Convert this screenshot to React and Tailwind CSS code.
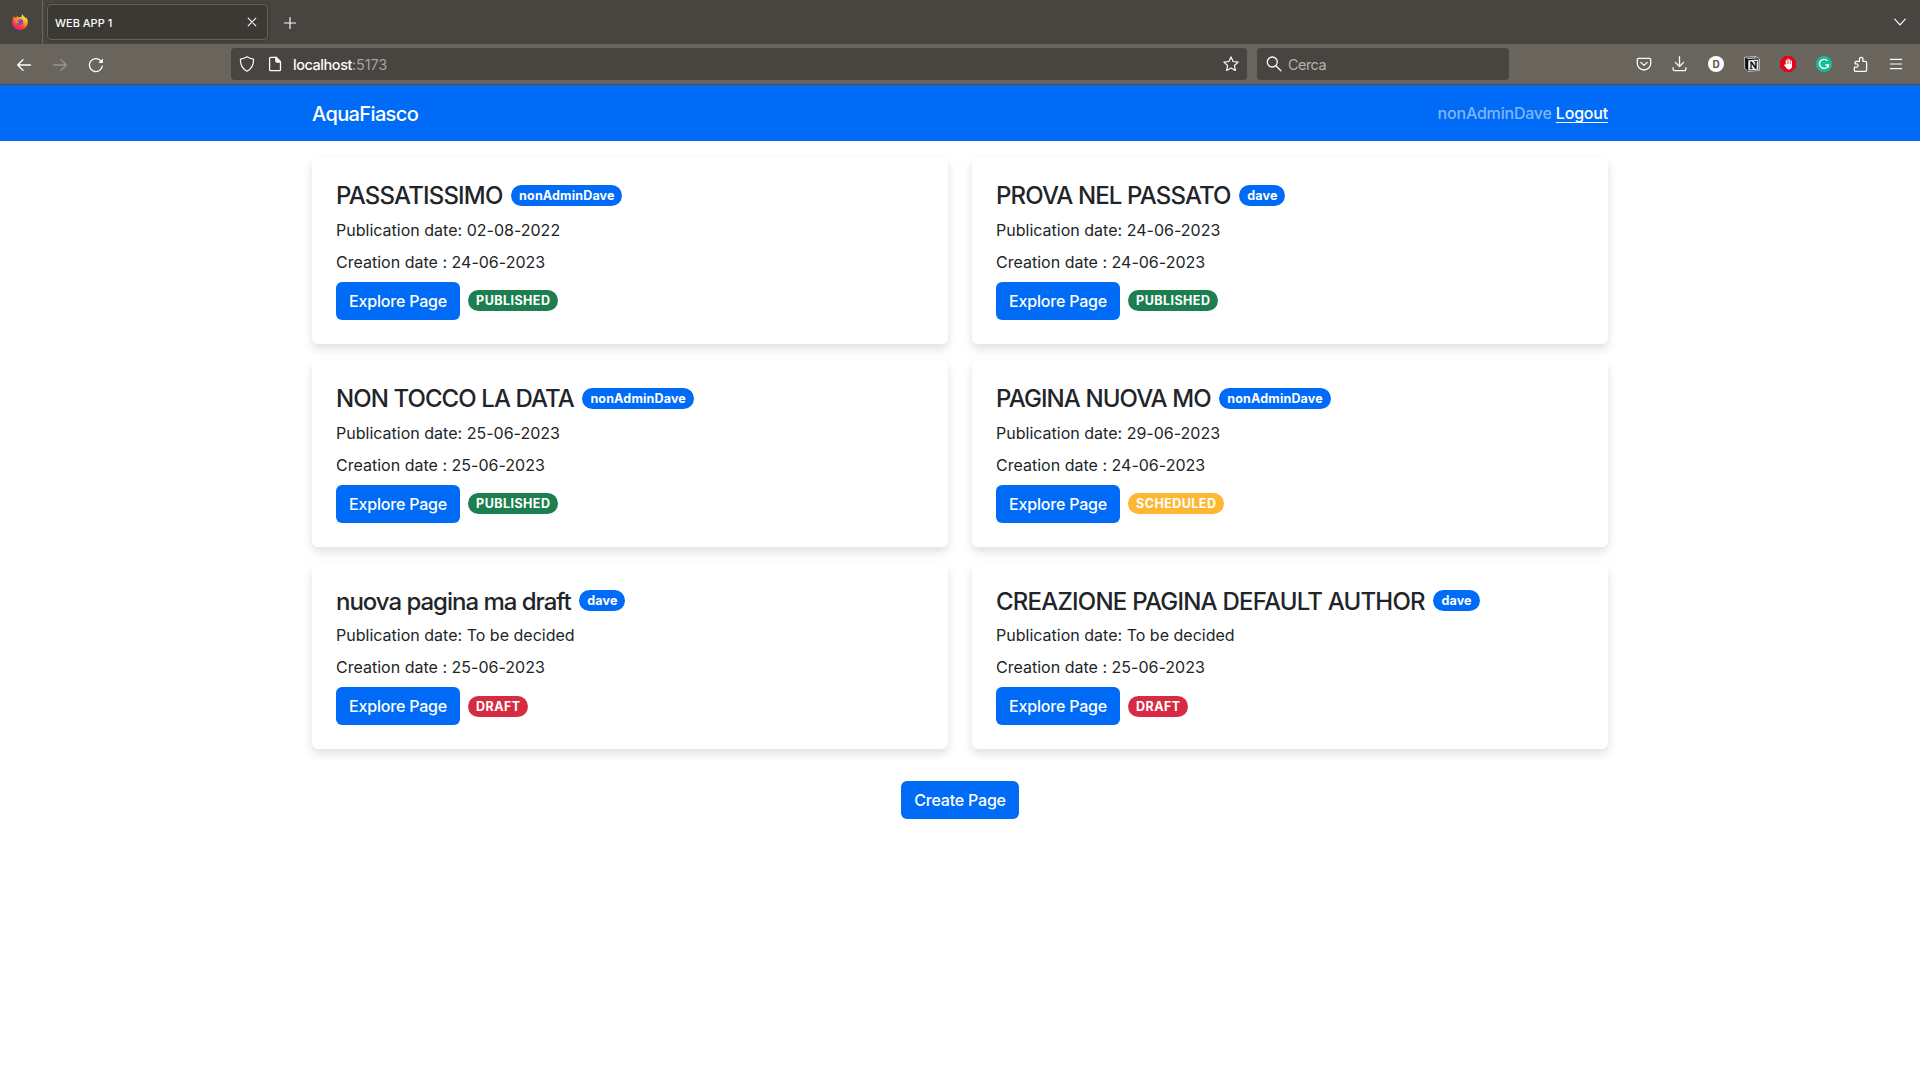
const cards = [
  { title: 'PASSATISSIMO', track: 'tracking-[-0.82px]', author: 'nonAdminDave', pub: '02-08-2022', created: '24-06-2023', status: 'PUBLISHED' },
  { title: 'PROVA NEL PASSATO', track: 'tracking-[-0.87px]', author: 'dave', pub: '24-06-2023', created: '24-06-2023', status: 'PUBLISHED' },
  { title: 'NON TOCCO LA DATA', track: 'tracking-[-0.92px]', author: 'nonAdminDave', pub: '25-06-2023', created: '25-06-2023', status: 'PUBLISHED' },
  { title: 'PAGINA NUOVA MO', track: 'tracking-[-0.9px]', author: 'nonAdminDave', pub: '29-06-2023', created: '24-06-2023', status: 'SCHEDULED' },
  { title: 'nuova pagina ma draft', track: 'tracking-[-1.02px]', author: 'dave', pub: 'To be decided', created: '25-06-2023', status: 'DRAFT' },
  { title: 'CREAZIONE PAGINA DEFAULT AUTHOR', track: 'tracking-[-0.78px]', author: 'dave', pub: 'To be decided', created: '25-06-2023', status: 'DRAFT' },
];

const statusColor = {
  PUBLISHED: 'bg-[#1d7f50]',
  SCHEDULED: 'bg-[#fcb733]',
  DRAFT: 'bg-[#d62c43]',
};

function Icon({ children, className = 'text-[#fbfbfe]' }) {
  return (
    <svg viewBox="0 0 16 16" width="16" height="16" fill="none" stroke="currentColor" strokeWidth="1.2" strokeLinecap="round" strokeLinejoin="round" className={'shrink-0 ' + className}>
      {children}
    </svg>
  );
}

function FirefoxLogo() {
  return (
    <svg viewBox="0 0 16 16" width="16" height="16" className="ml-3 shrink-0">
      <defs>
        <linearGradient id="fox" x1="0.8" y1="0.05" x2="0.25" y2="0.95">
          <stop offset="0" stopColor="#fff14a" />
          <stop offset="0.35" stopColor="#ffab1e" />
          <stop offset="0.65" stopColor="#ff4a33" />
          <stop offset="1" stopColor="#f0148c" />
        </linearGradient>
      </defs>
      <path d="M1.2 3.6c.3-.6.8-1 1.1-1.2l.5 1.4c.4-.2.9-.3 1.4-.2C4.700 2.700 5.400 2.200 5.900 2l-.2 1.700C7 2.800 8.600 3 9.500 3.500 9.100 2.200 9.700.9 10.600.2c.3 1.700 1.700 2.300 2.600 3.200.3.300.5.700.7 1l.3-1c.9 1.200 1.600 2.800 1.600 4.600C15.800 12.400 12.400 16 8 16S.2 12.600.2 8.300c0-1.700.4-3.200 1-4.700z" fill="url(#fox)" />
      <circle cx="8.100" cy="8" r="3" fill="#7a4ad8" />
      <path d="M3 5.500c1.500-1 3.500-.8 5 .3-.8.400-1.800.7-2.700.9.200 1 .9 1.600 1.900 1.800-1 1-3 .8-3.900-.6z" fill="#ff8a1f" />
    </svg>
  );
}

function BrowserChrome() {
  return (
    <header>
      <div className="flex h-11 items-center bg-[#484540]">
        <div className="flex h-11 w-[43px] items-center border-r border-[#6b665e]">
          <FirefoxLogo />
        </div>
        <div className="ml-1 flex h-9 w-[221px] items-center justify-between rounded border border-[#66625b] bg-[#3c3934] pr-[7px] pl-[7px] shadow-[0_0_3px_rgba(0,0,0,0.3)]">
          <span className="mt-0.5 text-[11px] font-medium text-[#fbfbfe]">WEB APP 1</span>
          <Icon><path d="M4.200 4.200l7.600 7.600M11.800 4.200l-7.600 7.600" strokeWidth="1.100" /></Icon>
        </div>
        <div className="mt-[1px] ml-[14px]">
          <Icon><path d="M8 2.500v11M2.500 8h11" /></Icon>
        </div>
        <div className="mr-3 ml-auto">
          <Icon><path d="M2.700 5.200L8 10.800l5.300-5.600" strokeWidth="1.200" /></Icon>
        </div>
      </div>
      <div className="flex h-[41px] items-center border-b border-[#4c4944] bg-[#69655c]">
        <div className="mt-px ml-4 flex w-[215px] gap-5">
          <Icon><path d="M14.500 8H1.700M7 2.700L1.700 8 7 13.300" strokeWidth="1.300" /></Icon>
          <Icon className="text-[#97938d]"><path d="M1.500 8h12.800M9 2.700L14.300 8 9 13.300" strokeWidth="1.300" /></Icon>
          <Icon>
            <path d="M14.300 9.200A6.500 6.500 0 1 1 12.600 3.600" strokeWidth="1.300" />
            <path d="M14.900 1.500v4.600h-4.600z" fill="currentColor" stroke="none" />
          </Icon>
        </div>
        <div className="flex h-8 w-[1016px] items-center rounded bg-[#484540] px-2">
          <Icon><path d="M8 .8c2 1.300 4.200 2 6.600 2.300C14.800 9 12.500 13 8 15.300 3.500 13 1.200 9 1.400 3.100 3.800 2.800 6 2.100 8 .8z" /></Icon>
          <Icon className="ml-3 text-[#fbfbfe]">
            <path d="M3.600 1.300h5.600l4.300 4.300v8.100a1 1 0 0 1-1 1H3.600a1 1 0 0 1-1-1V2.300a1 1 0 0 1 1-1z" strokeWidth="1.300" />
            <path d="M8.800 1.300v3.800a1 1 0 0 0 1 1h3.700z" fill="currentColor" />
          </Icon>
          <span className="mt-[3px] ml-[10px] text-[14.500px] leading-none font-medium tracking-[-0.45px] text-[#fbfbfe]">localhost<span className="font-normal tracking-[-0.15px] text-[#a3a19f]">:5173</span></span>
          <Icon className="ml-auto text-[#fbfbfe]"><path d="M8 .900l2.100 4.600 5 .600-3.700 3.400 1 5L8 12l-4.400 2.500 1-5L.900 6.100l5-.600z" /></Icon>
        </div>
        <div className="ml-[10px] flex h-8 w-[252px] items-center rounded bg-[#484540] pl-[9px]">
          <Icon><circle cx="6.300" cy="6" r="5" strokeWidth="1.300" /><path d="M9.900 9.700l5 5" strokeWidth="1.300" /></Icon>
          <span className="mt-[3px] ml-[6px] text-[14.500px] leading-none tracking-[-0.55px] text-[#b4b2b0]">Cerca</span>
        </div>
        <div className="mr-4 ml-auto flex items-center gap-5">
          <Icon><path d="M2.600 2.400h10.800a1.300 1.300 0 0 1 1.300 1.300v3.600a6.700 6.700 0 0 1-13.400 0V3.700a1.300 1.300 0 0 1 1.300-1.300zM4.800 6.400L8 9.400l3.200-3" strokeWidth="1.300" /></Icon>
          <Icon><path d="M7.500 .700v9.600M3.400 6.400L7.500 10.500l4.100-4.100M1.100 11.700v1.600a1.400 1.400 0 0 0 1.400 1.400h10a1.400 1.400 0 0 0 1.400-1.400v-1.600" strokeWidth="1.300" /></Icon>
          <span className="flex size-4 items-center justify-center rounded-full bg-white text-[10px] leading-none font-bold text-[#55524c]">D</span>
          <svg viewBox="0 0 16 16" width="16" height="16">
            <path d="M.6 1.300L12.200.5 15.500 3v11.400L4 15.500.6 12z" fill="#111" stroke="#f2f2f2" strokeWidth=".7" />
            <path d="M4.300 4.200l10.200-.7v10.200l-10.200.8z" fill="#f2f2f2" />
            <path d="M2 1.900l9.800-.600 1.700 1.100-9.300.600z" fill="#ccc" />
            <path d="M6 5.700h2l3.200 4.800V6.100l-.9-.3v-.5h3v.5l-.8.3v6.600h-1.400L7.500 7.600v4.600l1 .3v.5H5.900v-.5l.7-.3V6.300L6 6.100z" fill="#111" stroke="#111" strokeWidth=".3" />
          </svg>
          <svg viewBox="0 0 16 16" width="16" height="16">
            <path d="M4.700 0h6.600L16 4.700v6.600L11.300 16H4.700L0 11.300V4.700z" fill="#e0041c" />
            <path d="M6.300 4.400v5M8 3.200v5M9.700 3.600v5M11.400 5.200v5" stroke="#fff" strokeWidth="1.200" strokeLinecap="round" />
            <path d="M4.600 8.500l1.100.7V8h6.300v1.900c0 2.100-1.200 3.500-3.200 3.500-1.400 0-2.200-.6-2.900-1.800L4 9.100c-.2-.6.200-.9.600-.6z" fill="#fff" />
          </svg>
          <svg viewBox="0 0 16 16" width="16" height="16" fill="none">
            <circle cx="8" cy="8" r="8" fill="#15bf93" />
            <path d="M11.400 4.900A4.500 4.500 0 1 0 12.400 9H9.300M12.400 9v2.600" stroke="#fff" strokeWidth="1.300" />
          </svg>
          <Icon><path d="M3.200 15.300h10.200a1.200 1.200 0 0 0 1.200-1.200V6.500a1.200 1.200 0 0 0-1.200-1.200h-2.500V3a1.700 1.700 0 0 0-3.400 0v2.300H4.300a1.200 1.200 0 0 0-1.200 1.200v1.400h1.400a1.600 1.600 0 0 1 0 3.300H2.400v3.300a.8.8 0 0 0 .8.8z" strokeWidth="1.300" /></Icon>
          <Icon><path d="M2.300 3.300h11.400M2.300 8h11.400M2.300 12.700h11.400" strokeWidth="1.200" /></Icon>
        </div>
      </div>
    </header>
  );
}

function Badge({ color, track, children }) {
  return (
    <span className={'flex h-[21px] items-center rounded-full pt-[1.500px] pr-[7.800px] pl-[8.100px] text-[12.500px] leading-none font-[750] text-white ' + color + ' ' + track}>
      {children}
    </span>
  );
}

function Button({ width, children }) {
  return (
    <button className={'h-[38px] rounded-md bg-[#006bf6] text-center text-[16px] leading-6 font-[450] tracking-[-0.2px] whitespace-nowrap text-white ' + width}>
      {children}
    </button>
  );
}

function Card({ card }) {
  return (
    <article className="h-[186.800px] rounded-md bg-white p-6 shadow-[0_5px_10px_rgba(0,0,0,0.12)]">
      <div className="mb-2 flex h-[28.800px] items-center gap-[8.500px]">
        <h5 className={'mt-0.5 text-[24px] leading-[28.800px] font-medium whitespace-nowrap ' + card.track}>{card.title}</h5>
        <Badge color="bg-[#006bf6]" track="tracking-[0.17px]">{card.author}</Badge>
      </div>
      <p className="mb-2 leading-6 font-[430] tracking-[0.01px]">Publication date: {card.pub}</p>
      <p className="mb-2 leading-6 font-[430] tracking-[0.01px]">Creation date : {card.created}</p>
      <div className="flex items-center gap-2">
        <Button width="w-[124px]">Explore Page</Button>
        <Badge color={statusColor[card.status]} track="tracking-[0.45px]">{card.status}</Badge>
      </div>
    </article>
  );
}

export default function App() {
  return (
    <div className="h-[1080px] w-[1920px] overflow-hidden bg-white font-['Inter',sans-serif] text-[16px] text-[#212529]">
      <BrowserChrome />
      <nav className="flex h-14 items-center justify-between bg-[#006bf6] px-[312px]">
        <span className="mt-0.5 text-[20px] font-[450] tracking-[-0.62px] text-white">AquaFiasco</span>
        <span className="font-[450] tracking-[-0.2px] text-[#80b5fb]">nonAdminDave <a className="text-white underline underline-offset-[3px]">Logout</a></span>
      </nav>
      <main className="px-[312px] pt-4">
        <div className="grid grid-cols-2 gap-x-6 gap-y-4">
          {cards.map((card) => <Card key={card.title} card={card} />)}
        </div>
        <div className="mt-8 flex justify-center">
          <Button width="w-[118px]">Create Page</Button>
        </div>
      </main>
    </div>
  );
}
